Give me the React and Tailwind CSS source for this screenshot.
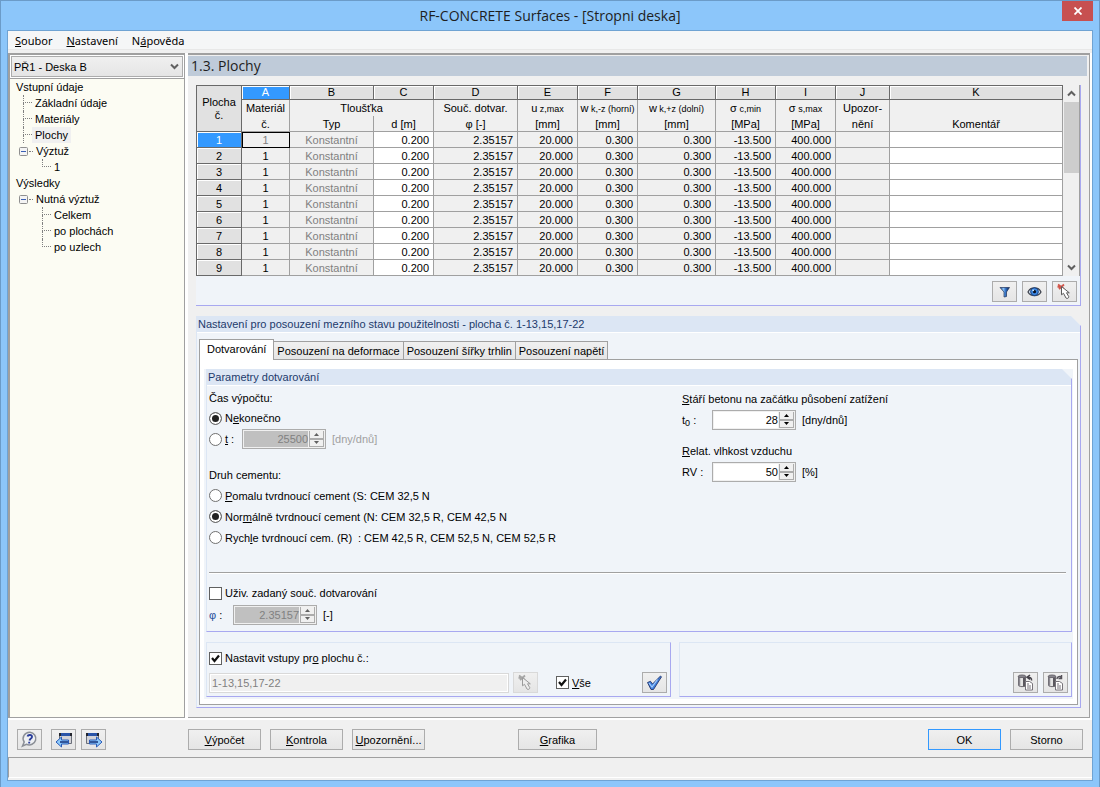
import { useState } from "react";

const COLUMNS = [
  { id: "A", width: "w-[48px]" },
  { id: "B", width: "w-[84px]" },
  { id: "C", width: "w-[60px]" },
  { id: "D", width: "w-[84px]" },
  { id: "E", width: "w-[60px]" },
  { id: "F", width: "w-[60px]" },
  { id: "G", width: "w-[78px]" },
  { id: "H", width: "w-[60px]" },
  { id: "I", width: "w-[60px]" },
  { id: "J", width: "w-[54px]" },
  { id: "K", width: "" },
];

const ROWS = [1, 2, 3, 4, 5, 6, 7, 8, 9].map((no) => ({
  no,
  material: "1",
  type: "Konstantní",
  d: "0.200",
  phi: "2.35157",
  uz: "20.000",
  wTop: "0.300",
  wBottom: "0.300",
  sc: "-13.500",
  ss: "400.000",
}));

const TABS = ["Dotvarování", "Posouzení na deformace", "Posouzení šířky trhlin", "Posouzení napětí"];

const CELL = "border-r border-b border-[#a0a0a0] p-0";
const NUM = "border-r border-b border-[#a0a0a0] p-0 pr-1 text-right";

// group boxes have their top right corner cut off
const CUT = "[clip-path:polygon(0_0,calc(100%_-_10px)_0,100%_10px,100%_100%,0_100%)]";

/* ---------- icons ---------- */

function FilterIcon() {
  return (
    <svg width="14" height="14" viewBox="0 0 14 14">
      <defs>
        <linearGradient id="funnel" x1="0" x2="1">
          <stop offset="0" stopColor="#163f86" />
          <stop offset="0.35" stopColor="#8ec3f5" />
          <stop offset="0.6" stopColor="#2f6ec4" />
          <stop offset="1" stopColor="#0a1f4c" />
        </linearGradient>
      </defs>
      <path d="M2 2.500h9.500L8.500 7v4.500l-2.500.5V7z" fill="url(#funnel)" stroke="#20345c" strokeWidth="0.700" />
    </svg>
  );
}

function EyeIcon() {
  return (
    <svg width="15" height="14" viewBox="0 0 15 14">
      <path d="M1 7C3.500 1.500 11.500 1.500 14 7C11.500 11.800 3.500 11.800 1 7z" fill="#cfdcea" stroke="#3a3f4a" strokeWidth="1.200" />
      <circle cx="7.500" cy="6.700" r="3.900" fill="#3b86e0" stroke="#173c78" strokeWidth="0.900" />
      <circle cx="7.500" cy="6.700" r="1.600" fill="#0a1020" />
      <circle cx="6.200" cy="5.300" r="0.900" fill="#d5ecff" />
    </svg>
  );
}

function PickIcon({ disabled }) {
  return (
    <svg width="17" height="17" viewBox="0 0 17 17">
      <path
        d="M2 1.500l6 4.500M8 1.500L3 6M1.500 3.800h5"
        stroke={disabled ? "#a6a6a6" : "#d2554a"}
        strokeWidth="1.800"
        fill="none"
      />
      <path
        d="M5.500 3.500v8.300l2-1.500 2.500 4.700c.8 1 3 .2 2.800-1.300L10.500 9.800h2.800z"
        fill={disabled ? "#ededed" : "#fff"}
        stroke={disabled ? "#9a9a9a" : "#5a5a5a"}
        strokeWidth="1"
      />
    </svg>
  );
}

function ApplyIcon() {
  return (
    <svg width="17" height="16" viewBox="0 0 17 16">
      <path d="M1.500 7.500l3-1.200L6.500 9 14.500 1l1 .8L7.500 14.500H5z" fill="#3f7fdc" stroke="#26366b" strokeWidth="0.900" />
      <path d="M3 8l3 4 5.500-7.500" stroke="#a8d0ff" strokeWidth="1.100" fill="none" />
    </svg>
  );
}

function HelpIcon() {
  return (
    <svg width="17" height="17" viewBox="0 0 17 17">
      <path d="M9 1.300a6.600 6.300 0 1 1-3.500 12L1.500 15l1.700-4A6.600 6.300 0 0 1 9 1.300z" fill="#eef0f3" stroke="#8b8f96" strokeWidth="1.500" />
      <path d="M6.500 5.500C7 3.300 11.300 3.500 11 6 10.800 7.600 8.800 7.500 8.500 9.500M8.200 10.800v1.700" stroke="#2b3e9b" strokeWidth="1.900" fill="none" />
    </svg>
  );
}

function WindowArrowIcon({ next }) {
  return (
    <svg width="18" height="16" viewBox="0 0 18 16">
      <g transform={next ? "translate(18 0) scale(-1 1)" : undefined}>
        <path d="M4.500 1.500H16.500V11.500H4.500z" fill="#d3d3d8" stroke="#6a6f7a" strokeWidth="1" />
        <path d="M6 1h9v3H6z" fill="#2a54a8" />
        <path d="M4 1h2v3H4zM15 1h2v3h-2z" fill="#23252e" />
        <path d="M1 10L6.500 5v3h7v4h-7v3z" fill="#8cc9fb" stroke="#2c5cb8" strokeWidth="1" />
        <path d="M5 10h8" stroke="#15307a" strokeWidth="1.500" />
      </g>
    </svg>
  );
}

function LibraryIcon({ load }) {
  return (
    <svg width="17" height="17" viewBox="0 0 17 17">
      <path d="M1.500 2v9.500c0 1.500 7 1.500 7 0V2" fill="#e4e4e4" stroke="#6b686f" />
      <path d="M2.500 3v9" stroke="#8b8890" strokeWidth="1.500" />
      <path d="M7 3v9.500" stroke="#5b585f" strokeWidth="2" />
      <ellipse cx="5" cy="2.300" rx="3.800" ry="1.300" fill="#8a8890" stroke="#6b686f" />
      <path d="M8.500 7.500h4l3 2v6.500h-7z" fill="#fff" stroke="#76737a" />
      <path d="M10 10h2M10 12h4M10 14h4" stroke="#76737a" />
      {load ? (
        <path d="M10 5c0-2 2-3 4-2M14.500 1v3.500h-3" stroke="#55525a" strokeWidth="1.500" fill="none" />
      ) : (
        <path d="M14.500 6.500c.5-2.500-1.500-3.500-4-3.200M13 1L10 3.300 13 5.500" stroke="#45424a" strokeWidth="1.500" fill="none" />
      )}
    </svg>
  );
}

function Chevron({ up }) {
  return (
    <svg width="9" height="7" viewBox="0 0 9 7">
      <path d={up ? "M1 5.500L4.500 2 8 5.500" : "M1 1.500L4.500 5 8 1.500"} stroke="#606060" strokeWidth="2" fill="none" />
    </svg>
  );
}

/* ---------- small controls ---------- */

function IconButton({ label, disabled, children }) {
  return (
    <button
      type="button"
      aria-label={label}
      disabled={disabled}
      className={
        "flex h-[21px] w-[25px] shrink-0 items-center justify-center border bg-linear-to-b from-[#f0f0f0] to-[#e5e5e5] " +
        (disabled ? "border-[#d9d9d9]" : "border-[#acacac]")
      }
    >
      {children}
    </button>
  );
}

function PushButton({ wide, primary, children }) {
  return (
    <button
      type="button"
      className={
        "h-[21px] shrink-0 border bg-linear-to-b from-[#f0f0f0] to-[#e5e5e5] text-center " +
        (wide ? "w-[79px] " : "w-[73px] ") +
        (primary ? "border-[#3399ff]" : "border-[#acacac]")
      }
    >
      {children}
    </button>
  );
}

function Radio({ name, checked, onChange, children }) {
  return (
    <label className="flex items-center gap-[3px]">
      <input
        type="radio"
        name={name}
        checked={checked}
        onChange={onChange}
        className="size-[13px] shrink-0 appearance-none rounded-full border border-[#707070] bg-white checked:bg-[#222] checked:shadow-[inset_0_0_0_2px_#fff]"
      />
      {children}
    </label>
  );
}

function Checkbox({ checked, onChange, children }) {
  return (
    <label className="flex items-center gap-[3px]">
      <span className="grid size-[13px] shrink-0">
        <input
          type="checkbox"
          checked={checked}
          onChange={onChange}
          className="size-[13px] appearance-none border border-[#606060] bg-white [grid-area:1/1]"
        />
        {checked && (
          <svg viewBox="0 0 13 13" className="pointer-events-none size-[13px] [grid-area:1/1]">
            <path d="M3 6l2.500 3L10 3.500" stroke="#111" strokeWidth="2.200" fill="none" />
          </svg>
        )}
      </span>
      <span>{children}</span>
    </label>
  );
}

function Spinner({ id, label, value, disabled }) {
  const arrow = disabled ? "#606060" : "#000";
  return (
    <span className="flex h-5 w-[84px] shrink-0 border border-[#acacac] bg-[#f0f0f0] p-px">
      <input
        id={id}
        aria-label={label}
        defaultValue={value}
        disabled={disabled}
        className={"min-w-0 flex-1 text-right " + (disabled ? "bg-[#c0c0c0] text-[#808080]" : "bg-white")}
      />
      <span className="flex w-[16px] flex-col pl-px">
        <button type="button" aria-label="Zvýšit" disabled={disabled} className="flex flex-1 items-center justify-center border border-t-0 border-[#acacac]">
          <svg width="5" height="3" viewBox="0 0 5 3"><path d="M0 3L2.500 0 5 3z" fill={arrow} /></svg>
        </button>
        <button type="button" aria-label="Snížit" disabled={disabled} className="flex flex-1 items-center justify-center border border-[#acacac]">
          <svg width="5" height="3" viewBox="0 0 5 3"><path d="M0 0L2.500 3 5 0z" fill={arrow} /></svg>
        </button>
      </span>
    </span>
  );
}

function GroupTitle({ children }) {
  return <div className="h-[17px] border-b border-white bg-[#dce6f4] pl-px leading-4 text-[#1c3a6b]">{children}</div>;
}

/* ---------- navigator ---------- */

function Guide({ last }) {
  return (
    <span className="flex w-[9px] flex-col">
      <span className="h-2 border-b border-l border-dotted border-[#808080]" />
      {!last && <span className="h-2 border-l border-dotted border-[#808080]" />}
    </span>
  );
}

function Expander() {
  return (
    <span className="flex w-[14px] items-center">
      <svg width="9" height="9" viewBox="0 0 9 9" className="shrink-0">
        <rect x="0.5" y="0.5" width="8" height="8" rx="1" fill="#f4f4f4" stroke="#8f8f8f" />
        <path d="M2 4.500h5" stroke="#3a5fb5" />
      </svg>
      <span className="ml-px w-[4px] border-t border-dotted border-[#808080]" />
    </span>
  );
}

function TreeItem({ level, last, open, selected, children }) {
  return (
    <li className={"flex h-4 leading-4 " + (level === 0 ? "pl-[3px]" : level === 1 ? (open ? "pl-[9px]" : "pl-[13px]") : "pl-[32px]")}>
      {level > 0 && (open ? <Expander /> : <Guide last={last} />)}
      <a href="#" className={"px-[3px] " + (selected ? "bg-[#f0f0f0]" : "")}>{children}</a>
    </li>
  );
}

function Navigator() {
  return (
    <nav className="flex w-[177px] shrink-0 flex-col border-t-2 border-r border-b border-l-2 border-[#a0a0a0] bg-[#fcfcf3]">
      <div className="grid bg-white p-px">
        <select aria-label="Případ" className="h-[21px] appearance-none border border-[#acacac] bg-linear-to-b from-[#f0f0f0] to-[#e5e5e5] pl-[2px] [grid-area:1/1]">
          <option>PŘ1 - Deska B</option>
        </select>
        <span className="pointer-events-none self-center justify-self-end pr-1 [grid-area:1/1]">
          <Chevron />
        </span>
      </div>
      <ul className="border-t border-[#a0a0a0]">
        <TreeItem level={0}>Vstupní údaje</TreeItem>
        <TreeItem level={1}>Základní údaje</TreeItem>
        <TreeItem level={1}>Materiály</TreeItem>
        <TreeItem level={1} selected>Plochy</TreeItem>
        <TreeItem level={1} open>Výztuž</TreeItem>
        <TreeItem level={2} last>1</TreeItem>
        <TreeItem level={0}>Výsledky</TreeItem>
        <TreeItem level={1} open>Nutná výztuž</TreeItem>
        <TreeItem level={2}>Celkem</TreeItem>
        <TreeItem level={2}>po plochách</TreeItem>
        <TreeItem level={2} last>po uzlech</TreeItem>
      </ul>
    </nav>
  );
}

/* ---------- surfaces table ---------- */

function Symbol({ base, index }) {
  return (
    <span className="text-[9px]">
      <span className="text-[11px]">{base}</span> {index}
    </span>
  );
}

function SurfacesTable() {
  const head = "border-r border-[#a0a0a0] p-0 font-normal whitespace-nowrap";
  const unit = "border-r border-b border-[#a0a0a0] p-0 font-normal whitespace-nowrap";
  return (
    <table className="min-w-0 flex-1 table-fixed border-separate border-spacing-0 border-t border-l border-[#696969] bg-[#f0f0f0] leading-[14px]">
      <colgroup>
        <col className="w-[45px]" />
        {COLUMNS.map((c) => (
          <col key={c.id} className={c.width} />
        ))}
      </colgroup>
      <thead>
        <tr className="h-[14px]">
          <th rowSpan={3} className="border-r border-b border-[#696969] bg-[#e1e1e1] p-0 font-normal leading-[13px]">
            Plocha
            <br />
            č.
          </th>
          {COLUMNS.map((c) => (
            <th
              key={c.id}
              className={
                "border-r border-b border-[#696969] p-0 font-normal leading-[13px] shadow-[inset_1px_1px_0_#fff] " +
                (c.id === "A" ? "bg-[#3399ff] text-white" : "bg-[#e1e1e1]")
              }
            >
              {c.id}
            </th>
          ))}
        </tr>
        <tr className="h-4">
          <th className={head}>Materiál</th>
          <th colSpan={2} className={head}>Tloušťka</th>
          <th className={head}>Souč. dotvar.</th>
          <th className={head}><Symbol base="u" index="z,max" /></th>
          <th className={head}><Symbol base="w" index="k,-z (horní)" /></th>
          <th className={head}><Symbol base="w" index="k,+z (dolní)" /></th>
          <th className={head}><Symbol base="σ" index="c,min" /></th>
          <th className={head}><Symbol base="σ" index="s,max" /></th>
          <th className={head}>Upozor-</th>
          <th className={head}></th>
        </tr>
        <tr className="h-4">
          <th className={unit}>č.</th>
          <th className={unit}>Typ</th>
          <th className={unit}>d [m]</th>
          <th className={unit}>φ [-]</th>
          <th className={unit}>[mm]</th>
          <th className={unit}>[mm]</th>
          <th className={unit}>[mm]</th>
          <th className={unit}>[MPa]</th>
          <th className={unit}>[MPa]</th>
          <th className={unit}>nění</th>
          <th className={unit}>Komentář</th>
        </tr>
      </thead>
      <tbody>
        {ROWS.map((r) => (
          <tr key={r.no} className="h-4">
            <th
              className={
                "border-r border-b border-[#696969] p-0 font-normal shadow-[inset_1px_1px_0_#fff] " +
                (r.no === 1 ? "bg-[#3399ff] text-white" : "bg-[#e1e1e1]")
              }
            >
              {r.no}
            </th>
            <td className={CELL + " text-center " + (r.no === 1 ? "text-[#808080] outline-1 -outline-offset-1 outline-black" : "")}>
              {r.material}
            </td>
            <td className={CELL + " text-center text-[#808080]"}>{r.type}</td>
            <td className={NUM + " bg-white"}>{r.d}</td>
            <td className={NUM}>{r.phi}</td>
            <td className={NUM}>{r.uz}</td>
            <td className={NUM}>{r.wTop}</td>
            <td className={NUM}>{r.wBottom}</td>
            <td className={NUM}>{r.sc}</td>
            <td className={NUM}>{r.ss}</td>
            <td className={CELL}></td>
            <td className={CELL + " bg-white"}></td>
          </tr>
        ))}
      </tbody>
    </table>
  );
}

function TablePanel() {
  return (
    <section className="border-r border-b border-[#a8a8f0] bg-[#f0f4f9]">
      <div className="flex">
        <SurfacesTable />
        <div className="flex w-[17px] flex-col items-center border-r border-[#a0a0a0] bg-[#f0f0f0]">
          <button type="button" aria-label="Nahoru" className="flex h-[17px] shrink-0 items-center"><Chevron up /></button>
          <span className="h-[71px] w-[15px] bg-[#cdcdcd]" />
          <button type="button" aria-label="Dolů" className="mt-auto flex h-[17px] items-center"><Chevron /></button>
        </div>
      </div>
      <div className="flex justify-end gap-[5px] pt-[5px] pr-[3px] pb-[3px]">
        <IconButton label="Filtr"><FilterIcon /></IconButton>
        <IconButton label="Zobrazit"><EyeIcon /></IconButton>
        <IconButton label="Vybrat plochu"><PickIcon /></IconButton>
      </div>
    </section>
  );
}

/* ---------- creep settings ---------- */

function CreepGroup() {
  const [time, setTime] = useState("inf");
  const [cement, setCement] = useState("N");
  const [custom, setCustom] = useState(false);

  return (
    <section className={"border-r border-b border-l border-r-[#a8a8f0] border-b-[#a8a8f0] border-l-[#dce6f4] " + CUT}>
      <GroupTitle>Parametry dotvarování</GroupTitle>
      <div className="pt-[2px] pr-[5px] pb-[6px] pl-[2px]">
        <div className="flex">
          <div className="w-[473px] shrink-0">
            <div className="h-5 leading-5">Čas výpočtu:</div>
            <div className="flex h-5 items-center">
              <Radio name="time" checked={time === "inf"} onChange={() => setTime("inf")}>
                <span>N<u>e</u>konečno</span>
              </Radio>
            </div>
            <div className="mt-px flex h-5 items-center">
              <div className="w-[33px]">
                <Radio name="time" checked={time === "t"} onChange={() => setTime("t")}>
                  <span><u>t</u> :</span>
                </Radio>
              </div>
              <Spinner label="t" value="25500" disabled />
              <span className="pl-[6px] text-[#a0a0a0]">[dny/dnů]</span>
            </div>
            <div className="mt-4 h-5 leading-5">Druh cementu:</div>
            <div className="flex h-[21px] items-center">
              <Radio name="cement" checked={cement === "S"} onChange={() => setCement("S")}>
                <span><u>P</u>omalu tvrdnoucí cement (S: CEM 32,5 N</span>
              </Radio>
            </div>
            <div className="flex h-[21px] items-center">
              <Radio name="cement" checked={cement === "N"} onChange={() => setCement("N")}>
                <span>Nor<u>m</u>álně tvrdnoucí cement (N: CEM 32,5 R, CEM 42,5 N</span>
              </Radio>
            </div>
            <div className="flex h-[21px] items-center">
              <Radio name="cement" checked={cement === "R"} onChange={() => setCement("R")}>
                <span className="w-[130px]">Rych<u>l</u>e tvrdnoucí cem. (R)</span>
                <span>: CEM 42,5 R, CEM 52,5 N, CEM 52,5 R</span>
              </Radio>
            </div>
          </div>
          <div>
            <label htmlFor="t0" className="block h-[22px] leading-[22px]"><u>S</u>táří betonu na začátku působení zatížení</label>
            <div className="flex h-5 items-center">
              <label htmlFor="t0" className="w-[30px]">t<sub className="text-[9px]">0</sub> :</label>
              <Spinner id="t0" value="28" />
              <span className="pl-[6px]">[dny/dnů]</span>
            </div>
            <label htmlFor="rv" className="mt-[10px] block h-[22px] leading-[22px]"><u>R</u>elat. vlhkost vzduchu</label>
            <div className="flex h-5 items-center">
              <label htmlFor="rv" className="w-[30px]">RV :</label>
              <Spinner id="rv" value="50" />
              <span className="pl-[6px]">[%]</span>
            </div>
          </div>
        </div>
        <hr className="mt-6 mb-[10px] border-t border-[#a0a0a0] shadow-[0_1px_0_#fff]" />
        <div className="flex h-5 items-center">
          <Checkbox checked={custom} onChange={() => setCustom(!custom)}>Uživ. zadaný souč. dotvarování</Checkbox>
        </div>
        <div className="mt-[2px] flex h-5 items-center">
          <label htmlFor="phi" className="w-[24px]"><span className="text-[#1f4f9a]">φ</span> :</label>
          <Spinner id="phi" value="2.35157" disabled />
          <span className="pl-[6px]">[-]</span>
        </div>
      </div>
    </section>
  );
}

function ApplyGroup() {
  const [apply, setApply] = useState(true);
  const [all, setAll] = useState(true);
  const box = "border border-t-[#dce6f4] border-l-[#dce6f4] border-r-[#a8a8f0] border-b-[#a8a8f0]";
  return (
    <div className="mt-[10px] flex gap-2">
      <section className={box + " w-[465px] shrink-0 pt-[5px] pr-[3px] pb-[3px] pl-[2px]"}>
        <div className="flex h-5 items-center">
          <Checkbox checked={apply} onChange={() => setApply(!apply)}>Nastavit vstupy pr<u>o</u> plochu č.:</Checkbox>
        </div>
        <div className="mt-[4px] flex h-[21px] items-center">
          <input
            aria-label="Plochy č."
            disabled
            defaultValue="1-13,15,17-22"
            className="mr-1 h-5 w-[300px] border border-[#d9d9d9] bg-[#f0f0f0] px-[2px] text-[#808080] shadow-[inset_0_0_0_1px_#fff]"
          />
          <IconButton label="Vybrat" disabled><PickIcon disabled /></IconButton>
          <div className="pl-[18px]">
            <Checkbox checked={all} onChange={() => setAll(!all)}><u>V</u>še</Checkbox>
          </div>
          <div className="ml-auto">
            <IconButton label="Použít"><ApplyIcon /></IconButton>
          </div>
        </div>
      </section>
      <section className={box + " flex flex-1 items-end justify-end gap-[5px] pr-[3px] pb-[3px]"}>
        <IconButton label="Uložit do knihovny"><LibraryIcon /></IconButton>
        <IconButton label="Načíst z knihovny"><LibraryIcon load /></IconButton>
      </section>
    </div>
  );
}

function SettingsPanel() {
  const [tab, setTab] = useState(0);
  return (
    <section className={"mt-[10px] border-r border-b border-l border-r-[#a8a8f0] border-b-[#a8a8f0] border-l-[#dce6f4] bg-[#f0f4f9] " + CUT}>
      <GroupTitle>Nastavení pro posouzení mezního stavu použitelnosti - plocha č. 1-13,15,17-22</GroupTitle>
      <div className="px-[2px] pt-[6px] pb-[2px]">
        <div role="tablist" className="flex h-[20px] items-end">
          {TABS.map((t, i) => (
            <button
              key={t}
              type="button"
              role="tab"
              aria-selected={tab === i}
              onClick={() => setTab(i)}
              className={
                tab === i
                  ? "z-10 -mb-px h-[21px] border border-b-0 border-[#a0a0a0] bg-white px-[7px] pb-[2px]"
                  : "h-[18px] border border-b-0 border-l-0 border-[#a0a0a0] bg-linear-to-b from-[#f0f0f0] to-[#e5e5e5] px-[3px]"
              }
            >
              {t}
            </button>
          ))}
        </div>
        <div className="border border-[#a0a0a0] bg-white px-[4px] pt-[9px] pb-[5px]">
          <div className="bg-[#f0f4f9] pr-px pb-[2px] pl-[2px]">
            <CreepGroup />
            <ApplyGroup />
          </div>
        </div>
      </div>
    </section>
  );
}

export default function App() {
  return (
    <div className="flex min-h-screen flex-col border border-[#6b9bc8] bg-[#8cc6fa] font-['Liberation_Sans',Arial,sans-serif] text-[11px] leading-4 text-black">
      <header className="flex h-[29px] items-start font-['Open_Sans',sans-serif]">
        <span className="w-[37px] shrink-0" />
        <h1 className="flex-1 text-center text-[14px] leading-[30px] text-[#1e1e1e]">RF-CONCRETE Surfaces - [Stropni deska]</h1>
        <button type="button" aria-label="Zavřít" className="mr-[6px] flex h-5 w-[31px] items-center justify-center bg-[#c75050]">
          <svg width="8" height="8" viewBox="0 0 8 8"><path d="M0.500 0.500l7 7M7.500 0.500l-7 7" stroke="#fff" strokeWidth="1.800" /></svg>
        </button>
      </header>

      <div className="mx-[6px] mb-[6px] flex flex-1 flex-col border border-[#6fa3d3] bg-[#f0f0f0]">
        <nav className="mb-[3px] flex h-[19px] gap-[14px] border-b border-[#e8e8e8] bg-[#f5f6f7] pl-[7px] font-['Noto_Sans',sans-serif] leading-5">
          <a href="#"><u>S</u>oubor</a>
          <a href="#"><u>N</u>astavení</a>
          <a href="#">N<u>á</u>pověda</a>
        </nav>

        <div className="flex flex-1 border-b-2 border-white bg-white pr-[2px]">
          <Navigator />
          <main className="ml-[3px] min-w-0 flex-1 border-t-2 border-r border-b border-[#a0a0a0] bg-[#f0f0f0] pb-[9px]">
            <h2 className="mt-px mr-[2px] h-5 bg-[#bfcbd9] pl-[3px] font-['Open_Sans',sans-serif] text-[14px] leading-5 text-[#1e1e1e]">1.3. Plochy</h2>
            <div className="mt-[9px] mr-[8px] ml-[8px]">
              <TablePanel />
              <SettingsPanel />
            </div>
          </main>
        </div>

        <footer>
          <div className="flex h-[37px] items-center gap-[9px] px-[9px] pt-[2px]">
            <IconButton label="Nápověda"><HelpIcon /></IconButton>
            <span className="flex gap-[5px]">
              <IconButton label="Předchozí"><WindowArrowIcon /></IconButton>
              <IconButton label="Další"><WindowArrowIcon next /></IconButton>
            </span>
            <span className="ml-[73px] flex gap-[9px]">
              <PushButton><u>V</u>ýpočet</PushButton>
              <PushButton><u>K</u>ontrola</PushButton>
              <PushButton><u>U</u>pozornění...</PushButton>
            </span>
            <span className="ml-[84px] flex">
              <PushButton wide><u>G</u>rafika</PushButton>
            </span>
            <span className="ml-auto flex gap-[9px]">
              <PushButton primary>OK</PushButton>
              <PushButton>Storno</PushButton>
            </span>
          </div>
          <div role="status" className="mb-[2px] h-[21px] border-t border-b border-l border-[#a0a0a0] border-b-white" />
        </footer>
      </div>
    </div>
  );
}
